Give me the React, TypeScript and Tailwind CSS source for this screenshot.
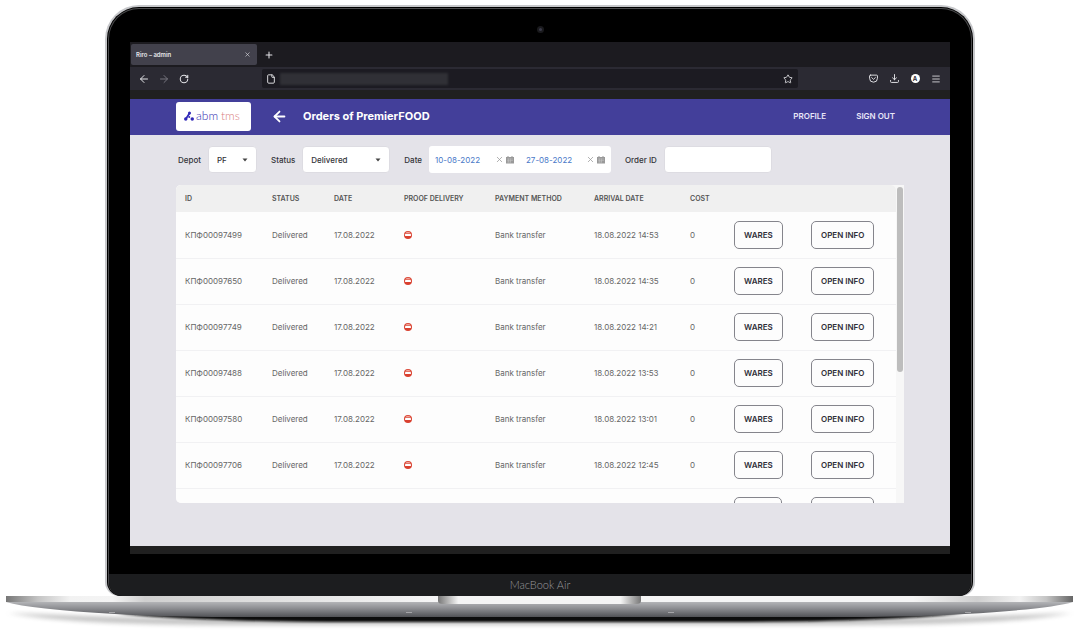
import type { ReactNode } from "react";
import { ArrowLeft, ArrowRight, File, Menu, Plus, RotateCw, Star, X } from "lucide-react";

type Order = {
  id: string;
  status: string;
  date: string;
  payment: string;
  arrival: string;
  cost: number;
};

const orders: Order[] = [
  ["КПФ00097499", "14:53"],
  ["КПФ00097650", "14:35"],
  ["КПФ00097749", "14:21"],
  ["КПФ00097488", "13:53"],
  ["КПФ00097580", "13:01"],
  ["КПФ00097706", "12:45"],
].map(([id, time]) => ({
  id,
  status: "Delivered",
  date: "17.08.2022",
  payment: "Bank transfer",
  arrival: `18.08.2022 ${time}`,
  cost: 0,
}));

// relative widths, the fixed table scales them to the space it has
const columns = [
  { label: "ID", width: "w-[96px]" },
  { label: "STATUS", width: "w-[62px]" },
  { label: "DATE", width: "w-[70px]" },
  { label: "PROOF DELIVERY", width: "w-[91px]" },
  { label: "PAYMENT METHOD", width: "w-[99px]" },
  { label: "ARRIVAL DATE", width: "w-[96px]" },
  { label: "COST", width: "w-[44px]" },
  { label: "", width: "w-[77px]" },
  { label: "", width: "w-[85px]" },
];

function IconButton({ label, children }: { label: string; children: ReactNode }) {
  return (
    <button type="button" aria-label={label} className="flex size-3 items-center justify-center">
      {children}
    </button>
  );
}

function BrowserChrome() {
  return (
    <div className="text-[#e4e4e8]">
      <div className="flex h-[25px] items-center bg-[#1c1b20] pl-px">
        <div className="flex h-[21px] w-[126px] items-center justify-between rounded-xs bg-[#42414c] pr-1 pl-[5px] text-[6px] font-semibold">
          Riro – admin
          <IconButton label="Close tab">
            <X size={7} strokeWidth={2} />
          </IconButton>
        </div>
        <div className="ml-1.5">
          <IconButton label="New tab">
            <Plus size={10} strokeWidth={2.5} />
          </IconButton>
        </div>
      </div>

      <div className="flex h-[23px] items-center bg-[#2b2a33]">
        <div className="flex w-[132px] gap-2 pl-2">
          <IconButton label="Back">
            <ArrowLeft size={12} strokeWidth={2} />
          </IconButton>
          <IconButton label="Forward">
            <ArrowRight size={12} strokeWidth={2} className="text-[#76757f]" />
          </IconButton>
          <IconButton label="Reload">
            <RotateCw size={10} strokeWidth={2.5} />
          </IconButton>
        </div>
        <div className="flex h-[19px] flex-1 items-center justify-between rounded-xs bg-[#1c1b22] px-1">
          <div className="flex items-center gap-1">
            <File size={10} strokeWidth={2.25} />
            <div className="h-3 w-[168px] bg-[#303036] blur-[1px]" />
          </div>
          <IconButton label="Bookmark this page">
            <Star size={10} strokeWidth={2} />
          </IconButton>
        </div>
        <div className="flex w-[152px] justify-end gap-[9px] pr-2">
          <IconButton label="Save to Pocket">
            <svg viewBox="0 0 16 16" className="size-[9px]" fill="none" stroke="currentColor" strokeWidth="1.7" strokeLinecap="round" strokeLinejoin="round">
              <path d="M2.5 2h11A1.5 1.5 0 0 1 15 3.5V7.5a7 7 0 0 1-14 0v-4A1.5 1.5 0 0 1 2.5 2Z" />
              <path d="m4.7 6.3 3.3 3.2 3.3-3.2" />
            </svg>
          </IconButton>
          <IconButton label="Downloads">
            <svg viewBox="0 0 16 16" className="size-[9px]" fill="none" stroke="currentColor" strokeWidth="1.7" strokeLinecap="round" strokeLinejoin="round">
              <path d="M8 1v9M4.5 6.8 8 10.2l3.5-3.4M1 11.5v2A1.5 1.5 0 0 0 2.5 15h11a1.5 1.5 0 0 0 1.5-1.5v-2" />
            </svg>
          </IconButton>
          <IconButton label="Account">
            <span className="flex size-[9px] items-center justify-center rounded-full bg-white text-[6px] leading-none font-bold text-[#2b2a33]">
              A
            </span>
          </IconButton>
          <IconButton label="Open menu">
            <Menu size={10} strokeWidth={2} />
          </IconButton>
        </div>
      </div>
      <div className="h-[9px] bg-[#202020]" />
    </div>
  );
}

function Logo() {
  return (
    <div className="flex h-[29px] w-[75px] items-center justify-center gap-0.5 rounded-[3px] bg-white">
      <svg viewBox="0 0 20 20" className="size-[10px]" fill="#3028b8" aria-hidden="true">
        <path d="M2 15 10 3l3 2-8 12Z" />
        <circle cx="11" cy="4" r="3" />
        <circle cx="3.5" cy="16" r="3.5" />
        <circle cx="10.5" cy="12" r="2" />
        <circle cx="16.5" cy="16" r="3.5" />
      </svg>
      <svg viewBox="0 0 47 14" className="h-[14px] w-[47px] font-['Lato']" aria-label="abm tms">
        <text x="0" y="11" fontSize="12" fontWeight="300" fill="#332db0">
          abm
        </text>
        <text x="25" y="11" fontSize="12" fontWeight="300" fill="#d98080">
          tms
        </text>
      </svg>
    </div>
  );
}

function AppHeader() {
  return (
    <header className="flex h-9 items-center bg-[#433f9a] pr-[55px] pb-0.5 pl-[46px] text-white">
      <Logo />
      <button type="button" aria-label="Back to list" className="ml-5">
        <ArrowLeft size={17} strokeWidth={2.5} />
      </button>
      <h1 className="ml-[15px] text-[11px] font-bold">Orders of PremierFOOD</h1>
      <nav className="ml-auto flex gap-[30px] text-[8px] font-semibold text-[#e8e6f8]">
        <a href="#profile">PROFILE</a>
        <a href="#sign-out">SIGN OUT</a>
      </nav>
    </header>
  );
}

function SelectField({ id, label, value, width }: { id: string; label: string; value: string; width: string }) {
  return (
    <div className="flex items-center gap-[7px]">
      <label htmlFor={id}>{label}</label>
      <div className="relative">
        <select id={id} className={`h-[27px] appearance-none rounded-sm border border-[#dddce2] bg-white pl-2 ${width}`}>
          <option>{value}</option>
        </select>
        <svg viewBox="0 0 6 4" className="pointer-events-none absolute top-3 right-[9px] h-1 w-1.5" fill="#444">
          <path d="M.5.5h5L3 3.5Z" />
        </svg>
      </div>
    </div>
  );
}

function DateInput({ label, value }: { label: string; value: string }) {
  return (
    <div className="flex w-[91px] items-center text-[#9a9a9a]">
      <input
        aria-label={label}
        defaultValue={value}
        className="w-[66px] pl-1.5 font-normal text-[#4a78c8] outline-none"
      />
      <button type="button" aria-label={`Clear ${label}`}>
        <X size={9} strokeWidth={2} />
      </button>
      <svg viewBox="0 0 8 8" className="ml-0.5 size-2" aria-hidden="true">
        <path d="M1.5 0h1v1h3V0h1v1H8v6.5H0V1h1.5Z" fill="#999" />
        <path d="M1 3h6M1 4.5h6M1 6h4M2.5 2.5v4M4.5 2.5v4" stroke="#d0d0d0" strokeWidth=".4" />
      </svg>
    </div>
  );
}

function Filters() {
  return (
    <form className="flex items-center gap-[14px] pt-[11px] pb-3 pl-[2px] text-[8px] font-medium text-[#333338]">
      <SelectField id="depot" label="Depot" value="PF" width="w-[49px]" />
      <SelectField id="status" label="Status" value="Delivered" width="w-[88px]" />
      <div className="flex items-center gap-[7px]">
        <span>Date</span>
        <div className="flex h-[27px] items-center rounded-[3px] bg-white">
          <DateInput label="Date from" value="10-08-2022" />
          <DateInput label="Date to" value="27-08-2022" />
        </div>
      </div>
      <div className="flex items-center gap-[7px]">
        <label htmlFor="order-id">Order ID</label>
        <input id="order-id" className="h-[27px] w-[108px] rounded-sm border border-[#dddce2] bg-white px-2" />
      </div>
    </form>
  );
}

function NoProofIcon() {
  return (
    <svg viewBox="0 0 8 8" className="size-2" role="img" aria-label="No proof of delivery">
      <circle cx="4" cy="4" r="4" fill="#d9402f" />
      <path d="M1 2.5a3.5 3.5 0 0 1 6 0Z" fill="#f0a59b" />
      <rect x="1" y="3" width="6" height="2" rx=".4" fill="#fff" />
    </svg>
  );
}

function RowButton({ children }: { children: ReactNode }) {
  return (
    <button
      type="button"
      className="h-7 rounded-[5px] border border-[#85858c] px-[9px] text-[8px] font-semibold whitespace-nowrap text-[#2f2f38]"
    >
      {children}
    </button>
  );
}

function OrderRow({ order }: { order: Order }) {
  return (
    <tr className="h-[46px] border-b border-[#f1f1f3]">
      <td className="pl-[9px]">{order.id}</td>
      <td>{order.status}</td>
      <td>{order.date}</td>
      <td>
        <NoProofIcon />
      </td>
      <td>{order.payment}</td>
      <td>{order.arrival}</td>
      <td>{order.cost}</td>
      <td>
        <RowButton>WARES</RowButton>
      </td>
      <td>
        <RowButton>OPEN INFO</RowButton>
      </td>
    </tr>
  );
}

// Placeholder for the next order, only its top edge shows in the scroll area
function PendingRow() {
  return (
    <tr className="h-[46px]">
      <td colSpan={7} />
      <td>
        <button type="button" aria-label="Wares" className="block h-7 w-12 rounded-[5px] border border-[#85858c]" />
      </td>
      <td>
        <button type="button" aria-label="Open info" className="block h-7 w-[63px] rounded-[5px] border border-[#85858c]" />
      </td>
    </tr>
  );
}

function OrdersTable() {
  return (
    <div className="flex h-[318px] overflow-hidden rounded-l-[5px] bg-[#f7f7f7]">
      <div className="flex-1 overflow-hidden rounded-tr-[5px] bg-[#fdfdfd]">
        <table className="w-full table-fixed border-collapse text-left text-[8px] text-[#666]">
          <thead>
            <tr className="h-[27px] bg-[#f0f0f0] text-[7px] text-[#555]">
              {columns.map((col, i) => (
                <th key={i} className={`pt-0.5 font-semibold whitespace-nowrap first:pl-[9px] ${col.width}`}>
                  {col.label}
                </th>
              ))}
            </tr>
          </thead>
          <tbody>
            {orders.map((order) => (
              <OrderRow key={order.id} order={order} />
            ))}
            <PendingRow />
          </tbody>
        </table>
      </div>
      <div className="w-2 px-px pt-0.5">
        <div className="h-[185px] rounded-full bg-[#bdbdbd]" />
      </div>
    </div>
  );
}

function LaptopBase() {
  return (
    <svg viewBox="0 0 1080 36" className="block w-full" aria-hidden="true">
      <defs>
        <linearGradient id="edge">
          <stop offset="0" stopColor="#777" />
          <stop offset=".03" stopColor="#c4c4c4" />
          <stop offset=".06" stopColor="#f2f2f2" />
          <stop offset=".1" stopColor="#f4f4f4" />
          <stop offset=".13" stopColor="#cfcfcf" />
          <stop offset=".4" stopColor="#f5f5f5" />
          <stop offset=".85" stopColor="#f5f5f5" />
          <stop offset=".91" stopColor="#cfcfcf" />
          <stop offset=".95" stopColor="#f2f2f2" />
          <stop offset=".975" stopColor="#c4c4c4" />
          <stop offset="1" stopColor="#666" />
        </linearGradient>
        <linearGradient id="body" x2="0" y2="1">
          <stop offset="0" stopColor="#b3b4b7" />
          <stop offset=".4" stopColor="#8f9094" />
          <stop offset="1" stopColor="#515256" />
        </linearGradient>
        <linearGradient id="notch">
          <stop offset="0" stopColor="#777" />
          <stop offset=".1" stopColor="#f4f4f4" />
          <stop offset=".9" stopColor="#f4f4f4" />
          <stop offset="1" stopColor="#777" />
        </linearGradient>
        <filter id="soft" x="-10%" y="-50%" width="120%" height="200%">
          <feGaussianBlur stdDeviation="5 2" />
        </filter>
        <filter id="rim" x="-10%" y="-50%" width="120%" height="200%">
          <feGaussianBlur stdDeviation="3 1" />
        </filter>
      </defs>
      <path d="M10 17Q80 20 150 22H930Q1000 20 1070 17Q1010 29 850 29H230Q70 29 10 17Z" fill="#555" opacity=".35" filter="url(#soft)" />
      <path d="M120 18H960Q880 26 720 26H360Q200 26 120 18Z" fill="#111" filter="url(#rim)" />
      <path d="M6 6H1073Q1050 13 965 18Q920 21 850 21H230Q160 21 115 18Q30 13 6 6Z" fill="url(#body)" />
      <path d="M6 0H1073V6H6Z" fill="url(#edge)" />
      <path d="M438 0H641V5Q641 8 636 8H443Q438 8 438 5Z" fill="url(#notch)" />
      <path d="M109 16.5h6M406 16.5h6M668 16.5h6M965 16.5h6" stroke="#a5a5a8" />
    </svg>
  );
}

export default function App() {
  return (
    <div className="overflow-hidden bg-white pt-[5px] font-['Inter','Liberation_Sans',sans-serif]">
      <div className="mx-[105px] rounded-t-[34px] rounded-b-[14px] bg-[#c6c7ca] px-0.5 pt-0.5">
        <div className="rounded-t-[32px] rounded-b-[14px] bg-black p-px pb-0">
          <div className="overflow-hidden rounded-t-[31px] rounded-b-[14px] border border-b-0 border-[#4a4a4c] bg-black">
            <div className="flex h-[33px] items-center justify-center pt-2">
              <div className="flex size-[7px] items-center justify-center rounded-full bg-[#1a1a1d]">
                <div className="size-[3px] rounded-full bg-[#3a3a48]" />
              </div>
            </div>
            <div className="mx-[21px]">
              <BrowserChrome />
              <div className="bg-[#e4e3e9]">
                <AppHeader />
                <main className="pr-[46px] pb-[43px] pl-[46px]">
                  <Filters />
                  <OrdersTable />
                </main>
              </div>
              <div className="h-2 bg-[#202020]" />
            </div>
            <div className="mt-5 flex h-[22px] items-center justify-center bg-[#1c1d1f] font-['Lato'] text-[11px] font-light text-[#9a9a9c]">
              MacBook Air
            </div>
          </div>
        </div>
      </div>
      <LaptopBase />
    </div>
  );
}
